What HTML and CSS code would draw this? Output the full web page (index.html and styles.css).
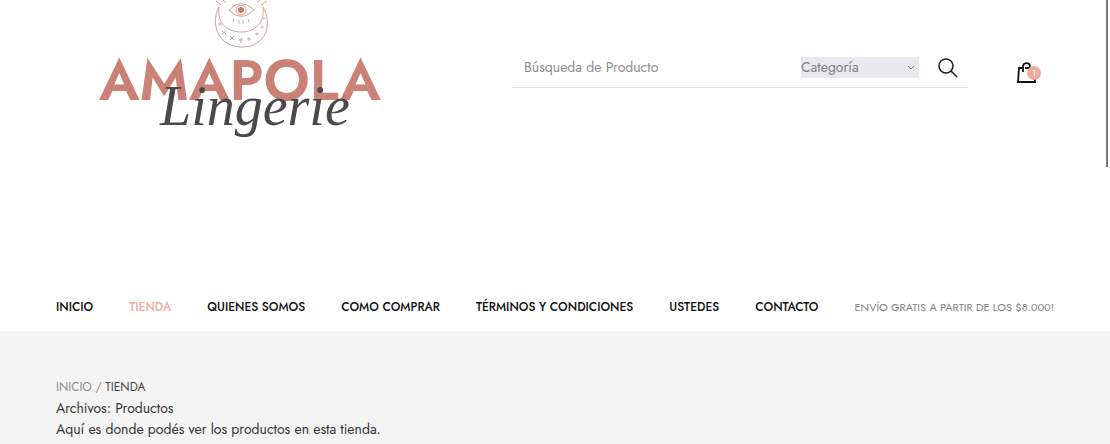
FILE: index.html
```html
<!DOCTYPE html>
<html lang="es">
<head>
    <meta charset="UTF-8">
    <meta name="viewport" content="width=device-width, initial-scale=1.0">
    <title>Tienda - Amapola Lingerie</title>
    <link rel="stylesheet" href="styles.css">
</head>
<body>
    <header class="header">
        <div class="header-top">
            <a class="logo" href="#" aria-label="Amapola Lingerie">
                <svg width="300" height="144" viewBox="92 0 300 144">
                    <g fill="none" stroke="#d9a198" stroke-width="1">
                        <path d="M219 7C210 24 218 47 242 47S273 24 263 7C265 22 256 32 241 32S217 22 219 7Z"/>
                        <path d="M229 10Q241 -3 254 10Q241 23 229 10Z"/>
                        <circle cx="241" cy="10" r="5"/>
                        <path d="M216 1L221 5M221 -2L226 3M227 -4L229 0M267 1L261 5M262 -2L257 3M255 -4L253 0"/>
                        <path d="M234 19L233 22M239 20V24M243 20V24M248 19L249 22"/>
                        <path d="M222 31L226 34M226 31L222 34M230 36L234 40M234 36L230 40M241 38V43M239 40H243M249 37V41M247 39H251"/>
                        <circle cx="220" cy="24" r="1"/>
                        <circle cx="257" cy="34" r="1"/>
                        <circle cx="262" cy="27" r="1"/>
                        <circle cx="264" cy="18" r="0.5"/>
                    </g>
                    <circle cx="241" cy="10" r="3" fill="#cc766b"/>
                    <text class="logo-name" x="99" y="100">AMAPOLA</text>
                    <text class="logo-script" x="160" y="125">Lingerie</text>
                </svg>
            </a>
            <form class="search">
                <input class="search-text" type="text" placeholder="Búsqueda de Producto" aria-label="Búsqueda de Producto">
                <select class="search-category" aria-label="Categoría">
                    <option>Categoría</option>
                </select>
                <button class="search-button" type="button" aria-label="Buscar">
                    <svg width="20" height="20" viewBox="0 0 20 20" fill="none" stroke="#222" stroke-width="1.6">
                        <circle cx="8" cy="8" r="7"/>
                        <path d="M13 13L19 19"/>
                    </svg>
                </button>
            </form>
            <a class="cart" href="#" aria-label="Carrito">
                <svg width="20" height="22" viewBox="0 0 20 22" fill="none" stroke="#111" stroke-width="1.8">
                    <path d="M8 6H17L18 20H1L2 6H6"/>
                    <path d="M6 10V5C6 0 13 0 13 4Q13 6 10 6"/>
                </svg>
                <span class="cart-count">1</span>
            </a>
        </div>
        <div class="header-bottom">
            <nav class="menu">
                <a href="#">INICIO</a>
                <a class="active" href="#">TIENDA</a>
                <a href="#">QUIENES SOMOS</a>
                <a href="#">COMO COMPRAR</a>
                <a href="#">TÉRMINOS Y CONDICIONES</a>
                <a href="#">USTEDES</a>
                <a href="#">CONTACTO</a>
            </nav>
            <p class="shipping">ENVÍO GRATIS A PARTIR DE LOS $8.000!</p>
        </div>
    </header>
    <main class="content">
        <div class="breadcrumb"><a href="#">INICIO</a> / <span>TIENDA</span></div>
        <h1>Archivos: Productos</h1>
        <p>Aquí es donde podés ver los productos en esta tienda.</p>
    </main>
    <div class="scroll-thumb"></div>
</body>
</html>
```

FILE: styles.css
```css
* {
    margin: 0;
    padding: 0;
    box-sizing: border-box;
}
body {
    min-height: 100vh;
    display: flex;
    flex-direction: column;
    font-family: Jost, Lato, sans-serif;
    font-size: 14px;
    line-height: 21px;
    color: #333;
    background-color: #fff;
}
a {
    color: inherit;
    text-decoration: none;
}
.header {
    padding: 0 56px;
}
.header-top {
    display: grid;
    grid-template-columns: 438fr 456fr 68fr;
    align-items: start;
    column-gap: 18px;
    min-height: 283px;
}
.logo {
    padding-left: 36px;
}
.logo svg {
    display: block;
}
.logo-name {
    font-size: 57px;
    font-weight: 600;
    fill: #cc8176;
}
.logo-script {
    font-family: "Liberation Serif", serif;
    font-size: 56px;
    font-style: italic;
    fill: #4a4a4a;
}
.search {
    display: flex;
    align-items: center;
    height: 40px;
    margin-top: 48px;
    padding: 0 10px 0 12px;
    border-bottom: 1px solid #ddd;
}
.search-text {
    flex: 1;
    min-width: 0;
    border: none;
    outline: none;
    background: none;
    font: inherit;
}
.search-text::placeholder {
    color: #8c8c8c;
    opacity: 1;
}
.search-category {
    width: 118px;
    height: 21px;
    border: none;
    appearance: none;
    font: inherit;
    color: #808080;
    background: #e9e9ed url("data:image/svg+xml,%3Csvg xmlns='http://www.w3.org/2000/svg' width='8' height='6' fill='none' stroke='%23777'%3E%3Cpath d='M1 1L4 4L7 1'/%3E%3C/svg%3E") no-repeat right 4px center;
}
.search-button {
    width: 20px;
    height: 20px;
    margin-left: 19px;
    border: none;
    background: none;
}
.search-button svg {
    display: block;
}
.cart {
    position: relative;
    justify-self: end;
    width: 24px;
    margin: 62px 13px 0 0;
}
.cart svg {
    display: block;
}
.cart-count {
    position: absolute;
    top: 4px;
    right: 0;
    width: 14px;
    height: 14px;
    border-radius: 50%;
    background-color: #f0a99c;
    color: #fff;
    font-size: 9px;
    line-height: 14px;
    text-align: center;
}
.header-bottom {
    display: flex;
    align-items: center;
    justify-content: space-between;
    height: 48px;
    font-size: 12px;
}
.menu {
    display: flex;
    gap: 36px;
    font-weight: 500;
    color: #111;
    white-space: nowrap;
}
.menu .active {
    color: #eeaea3;
}
.shipping {
    font-size: 11px;
    color: #808080;
    white-space: nowrap;
}
.content {
    flex: 1;
    padding: 46px 56px 0;
    background-color: #f4f4f4;
}
.content h1 {
    font-size: 14px;
    font-weight: 400;
}
.breadcrumb {
    font-size: 12px;
    color: #8c8c8c;
}
.breadcrumb span {
    color: #444;
}
.scroll-thumb {
    position: fixed;
    top: 0;
    right: 2px;
    width: 2px;
    height: 167px;
    background-color: #777;
}
```
